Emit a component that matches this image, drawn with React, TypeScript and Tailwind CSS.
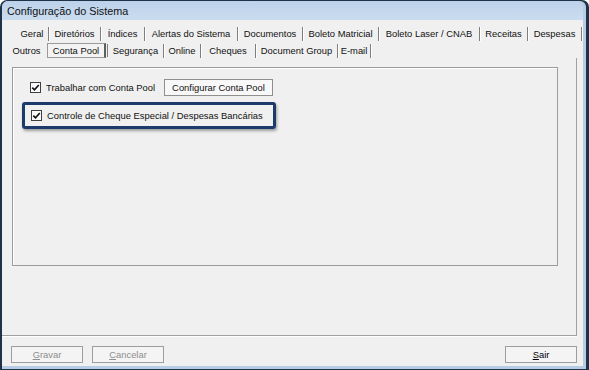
import { Fragment } from 'react'

interface TabDef {
  label: string
  w: string
  sep?: boolean
  active?: boolean
}

const row1: TabDef[] = [
  { label: 'Geral', w: 'w-[33px]', sep: true },
  { label: 'Diretórios', w: 'w-[52px]', sep: true },
  { label: 'Índices', w: 'w-[44px]', sep: true },
  { label: 'Alertas do Sistema', w: 'w-[93px]', sep: true },
  { label: 'Documentos', w: 'w-[65px]', sep: true },
  { label: 'Boleto Matricial', w: 'w-[76px]', sep: true },
  { label: 'Boleto Laser / CNAB', w: 'w-[101px]', sep: true },
  { label: 'Receitas', w: 'w-[48px]', sep: true },
  { label: 'Despesas', w: 'w-[54px]', sep: true },
]

const row2: TabDef[] = [
  { label: 'Outros', w: 'w-[41px]' },
  { label: 'Conta Pool', w: 'w-[61px]', active: true },
  { label: 'Segurança', w: 'w-[56px]', sep: true },
  { label: 'Online', w: 'w-[37px]', sep: true },
  { label: 'Cheques', w: 'w-[55px]', sep: true },
  { label: 'Document Group', w: 'w-[82px]', sep: true },
  { label: 'E-mail', w: 'w-[33px]', sep: true },
]

function Tab({ t }: { t: TabDef }) {
  if (t.active) {
    return (
      <div className={`${t.w} h-full flex items-stretch`}>
        <div className="w-[59px] flex items-center justify-center pt-px border border-[#9a9a9a] border-r-2 border-r-[#5e5e5e] bg-[#f3f3f3]">
          {t.label}
        </div>
        <div className="w-px" />
        <div className="w-px my-[1px] bg-[#7e7e7e]" />
      </div>
    )
  }
  return (
    <div className={`${t.w} h-full flex items-center`}>
      <span className="flex-1 text-center whitespace-nowrap pt-px">{t.label}</span>
      {t.sep && <div className="w-px h-[14px] bg-[#7e7e7e] shadow-[1px_0_0_#ffffff]" />}
    </div>
  )
}

function Check() {
  return (
    <div className="w-[11px] h-[11px] border border-[#3f3f3f] bg-[#fbfbfb] flex items-center justify-center shrink-0">
      <svg width="9" height="9" viewBox="0 0 9 9">
        <path d="M1.3 4.6 L3.5 6.8 L7.8 2" fill="none" stroke="#151515" strokeWidth="1.7" />
      </svg>
    </div>
  )
}

function Btn({ children, disabled }: { children: React.ReactNode; disabled?: boolean }) {
  return (
    <div
      className={`w-[72px] h-[17px] border border-[#9d9d9d] bg-[#f4f4f4] flex items-center justify-center ${
        disabled ? 'text-[#8e8e8e]' : 'text-black'
      }`}
    >
      {children}
    </div>
  )
}

export default function App() {
  return (
    <div className="w-[589px] h-[370px] bg-[#1f3247] rounded-t-[7px] pl-[2px] pt-[1px] pr-[3px] pb-[1px] font-['Liberation_Sans',Arial,sans-serif] text-[9.4px] leading-none text-[#111]">
      <div className="h-full flex flex-col bg-[#b7cde6] rounded-t-[6px] pr-[3px] pb-[3px]">
        <div className="h-[19px] shrink-0 flex items-center pl-[5px] pt-[2px] text-[10.8px] bg-linear-to-b from-[#bcd2eb] to-[#cbdcef] rounded-t-[6px]">
          Configuração do Sistema
        </div>
        <div className="flex-1 flex flex-col bg-[#f0f0f0]">
          <div className="h-[38px] shrink-0 flex flex-col pt-[5px]">
            <div className="h-[17px] flex pl-[14px]">
              {row1.map(t => (
                <Tab key={t.label} t={t} />
              ))}
            </div>
            <div className="h-[15px] mt-[1px] flex pl-[4px]">
              {row2.map(t => (
                <Fragment key={t.label}>
                  <Tab t={t} />
                </Fragment>
              ))}
            </div>
          </div>
          <div className="w-[575px] h-[278px] shrink-0 border-r border-b border-[#a0a0a0] shadow-[0_1px_0_#ffffff] pl-[10px] pt-[9px]">
            <div className="w-[546px] h-[199px] border border-[#9c9c9c] shadow-[inset_1px_1px_0_#ffffff] flex flex-col pt-[11px]">
              <div className="h-[17px] flex items-center pl-[17px]">
                <Check />
                <span className="w-[123px] pl-[5px] whitespace-nowrap">Trabalhar com Conta Pool</span>
                <div className="w-[109px] h-[17px] border border-[#8f8f8f] bg-[#f8f8f8] flex items-center justify-center">
                  Configurar Conta Pool
                </div>
              </div>
              <div className="ml-[9px] mt-[6px] w-[254px] h-[27px] border-[3px] border-[#1c3a6a] rounded-[3px] shadow-[1px_2px_3px_rgba(0,0,0,0.35)] flex items-center pl-[6px]">
                <Check />
                <span className="pl-[5px] whitespace-nowrap">Controle de Cheque Especial / Despesas Bancárias</span>
              </div>
            </div>
          </div>
          <div className="flex-1 flex items-start pt-[10px] pl-[9px] pr-[6px]">
            <Btn disabled>
              <span className="underline">G</span>ravar
            </Btn>
            <div className="ml-[9px]">
              <Btn disabled>
                <span className="underline">C</span>ancelar
              </Btn>
            </div>
            <div className="ml-auto">
              <Btn>
                <span className="underline">S</span>air
              </Btn>
            </div>
          </div>
        </div>
      </div>
    </div>
  )
}
